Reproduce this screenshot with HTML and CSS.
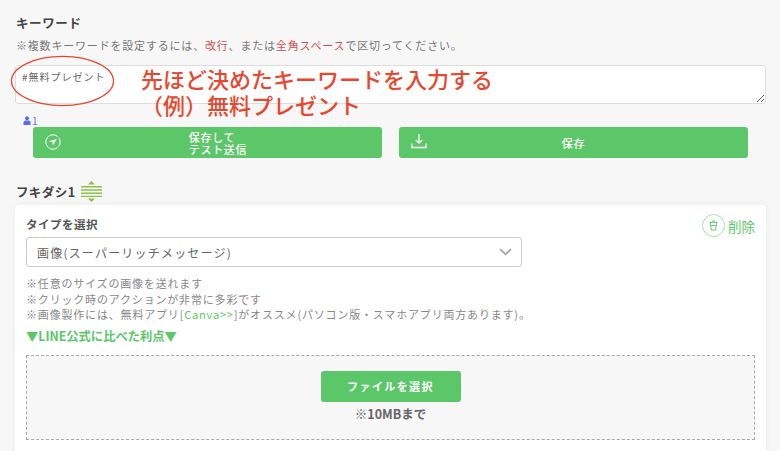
FILE: index.html
```html
<!DOCTYPE html>
<html lang="ja">
<head>
<meta charset="utf-8">
<title>キーワード</title>
<link rel="stylesheet" href="styles.css">
</head>
<body>
<main class="page">
  <h2 class="heading">キーワード</h2>
  <p class="note">※複数キーワードを設定するには、<span class="red">改行</span>、または<span class="red">全角スペース</span>で区切ってください。</p>
  <div class="keyword">
    <textarea class="area" readonly>#無料プレゼント</textarea>
    <svg class="ellipse" viewBox="0 0 104 52"><ellipse cx="52" cy="26" rx="51" ry="24.6" fill="none" stroke="#e8472f" stroke-width="1.3"/></svg>
    <div class="callout">先ほど決めたキーワードを入力する<br>（例）無料プレゼント</div>
  </div>
  <div class="count">
    <svg class="person" viewBox="0 0 8 9"><circle cx="4" cy="2.2" r="2" fill="#5a6cf0"/><path d="M.5 9V6.6C.5 5.2 1.6 4.6 4 4.6s3.5.6 3.5 2V9z" fill="#5a6cf0"/></svg>1
  </div>
  <div class="actions">
    <button class="btn" type="button">
      <svg class="btn-icon" viewBox="0 0 16 16"><circle cx="8" cy="8" r="7.2" fill="none" stroke="#fff" stroke-width="1"/><path d="M3.8 7.2 11.8 5 8 11.2 7.4 8.2z" fill="#fff"/></svg>
      <span class="two-line">保存して<br>テスト送信</span>
    </button>
    <button class="btn" type="button">
      <svg class="btn-icon wide" viewBox="0 0 16 16"><path d="M8 1v9M4.8 7 8 10.2 11.2 7M.8 10.5v4h14.4v-4" fill="none" stroke="#fff" stroke-width="1.3"/></svg>
      <span>保存</span>
    </button>
  </div>
  <div class="bubble-title">
    <h2 class="heading">フキダシ1</h2>
    <svg class="sort" viewBox="0 0 21 21"><path d="M10.5 0 14 3.6H7zM10.5 21 7 17.4h7z" fill="#8cc04a"/><path d="M0 5.8h21M0 9h21M0 12.2h21M0 15.4h21" stroke="#8cc04a" stroke-width="1.4"/></svg>
  </div>
  <section class="card">
    <div class="card-head">
      <h3 class="label">タイプを選択</h3>
      <div class="delete">
        <span class="trash"><svg viewBox="0 0 12 12"><path d="M1.5 2.6h9M2.6 2.6 3.6 11h4.8l1-8.4M4 1.2h4M3.2 6h5.6" fill="none" stroke="#5cc768" stroke-width="1"/></svg></span>削除
      </div>
    </div>
    <div class="select">
      <span>画像(スーパーリッチメッセージ)</span>
      <svg class="chev" viewBox="0 0 12 7"><path d="M1 1l5 4.6L11 1" fill="none" stroke="#aaa" stroke-width="1.8"/></svg>
    </div>
    <p class="hints">※任意のサイズの画像を送れます<br>※クリック時のアクションが非常に多彩です<br>※画像製作には、無料アプリ[<span class="link">Canva&gt;&gt;</span>]がオススメ(パソコン版・スマホアプリ両方あります)。</p>
    <p class="merit">▼LINE公式に比べた利点▼</p>
    <div class="drop">
      <button class="file" type="button">ファイルを選択</button>
      <p class="limit">※10MBまで</p>
    </div>
  </section>
</main>
</body>
</html>
```
FILE: styles.css
```css
* { box-sizing: border-box; }
html, body { margin: 0; height: 451px; overflow: hidden; }
body {
  background: #f7f7f7;
  color: #555;
  font-family: "Noto Sans CJK JP", "Noto Sans", sans-serif;
}
.page { padding: 14px 15px 0; }
.heading { margin: 0; font-size: 12.5px; font-weight: 700; line-height: 18px; letter-spacing: 0.6px; color: #444; padding-left: 1px; }
.bubble-title .heading { letter-spacing: .35px; }
.note { margin: 5px 0 0 1px; font-size: 11px; line-height: 16px; letter-spacing: .81px; color: #777; }
.red { color: #d3504f; }
.keyword { position: relative; margin-top: 12px; height: 39px; }
.area {
  display: block; width: 751px; height: 39px; padding: 4px 6px;
  border: 1px solid #ddd; border-radius: 3px; background: #fff;
  font: 10px/14px "Noto Sans CJK JP", sans-serif; letter-spacing: 1px; color: #666;
  outline: none; resize: vertical;
}
.ellipse { position: absolute; left: -5px; top: -10px; width: 105px; height: 52px; }
.callout {
  position: absolute; left: 126px; top: 0; width: 420px;
  font-size: 22px; line-height: 26px; font-weight: 500; color: #e8472f;
}
.count { display: flex; align-items: center; gap: 1px; height: 14px; margin: 9px 0 0 8px; font-size: 10px; color: #5a6cf0; }
.person { width: 8px; height: 9px; }
.actions { display: flex; gap: 17px; margin: 0 0 0 18px; }
.btn {
  position: relative; flex: 0 0 349px; height: 31px; padding: 0;
  border: 0; border-radius: 3px; background: #5cc768; color: #fff;
  font: 500 11px/12px "Noto Sans CJK JP", sans-serif; letter-spacing: .7px;
}
.two-line { display: inline-block; margin-left: 21px; text-align: left; }
.btn-icon { position: absolute; left: 12px; top: 7px; width: 16px; height: 16px; }
.btn-icon.wide { left: 12px; top: 6px; }
.bubble-title { display: flex; align-items: center; gap: 6px; margin-top: 23px; height: 21px; }
.sort { width: 21px; height: 21px; }
.card {
  margin-top: 3px; width: 751px; height: 260px; padding: 9px 11px;
  background: #fff; border-radius: 4px; box-shadow: 0 0 8px rgba(0,0,0,.05);
}
.card-head { display: flex; justify-content: space-between; height: 23px; }
.label { margin: 0; font-size: 11.5px; font-weight: 700; line-height: 20px; letter-spacing: .5px; color: #555; }
.delete { display: flex; align-items: center; gap: 3px; font-size: 13.5px; color: #5cc768; height: 23px; }
.trash { display: flex; align-items: center; justify-content: center; width: 23px; height: 23px; border: 1px solid #a4e0aa; border-radius: 50%; }
.trash svg { width: 11px; height: 11px; }
.select {
  display: flex; align-items: center; justify-content: space-between;
  width: 496px; height: 30px; padding: 0 9px 0 10px;
  border: 1px solid #ccc; border-radius: 3px; font-size: 12px; letter-spacing: 1.2px; color: #666;
}
.chev { width: 13px; height: 8px; }
.hints { margin: 9px 0 0; font-size: 11px; line-height: 15.5px; letter-spacing: .82px; color: #888; }
.link { color: #5cc768; }
.merit { margin: 5px 0 0; font-size: 12.3px; font-weight: 700; line-height: 17px; color: #5cc768; }
.drop {
  display: flex; flex-direction: column; align-items: center;
  width: 729px; height: 85px; margin-top: 10px; padding-top: 15px;
  background: #f7f7f7; border: 1px dashed #aaa;
}
.file {
  width: 140px; height: 31px; border: 0; border-radius: 3px; background: #5cc768; color: #fff;
  font: 700 11px/31px "Noto Sans CJK JP", sans-serif; letter-spacing: 1.4px; padding: 0;
}
.limit { margin: 4px 0 0; font-size: 12.5px; font-weight: 700; line-height: 16px; color: #666; }
```
